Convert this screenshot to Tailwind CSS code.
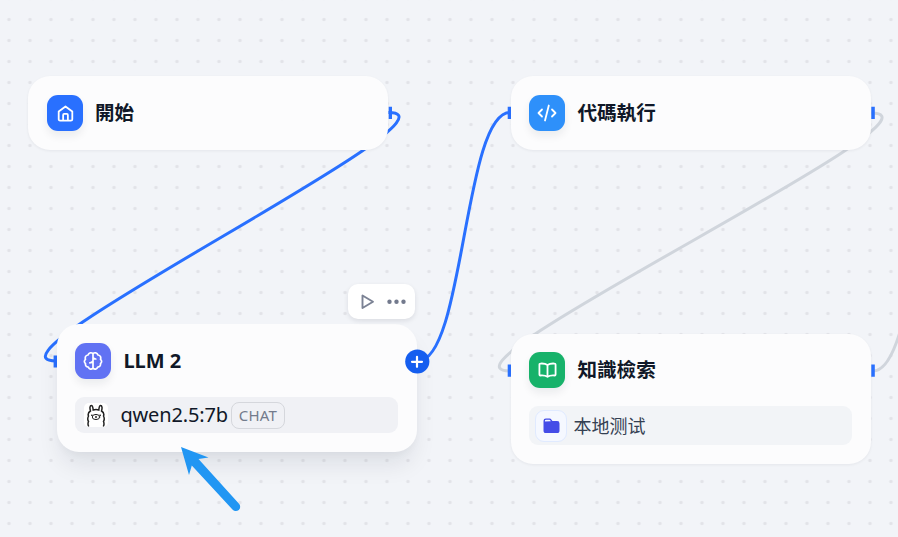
<!DOCTYPE html>
<html lang="zh-Hant">
<head>
<meta charset="utf-8">
<title>Workflow</title>
<script src="https://cdn.jsdelivr.net/npm/@tailwindcss/browser@4"></script>
</head>
<body class="font-['Noto_Sans','Noto_Sans_CJK_TC',sans-serif]">
<main class="relative w-[898px] h-[537px] overflow-hidden bg-[#f2f4f8] text-[#101828]">
  <!-- grid and edges -->
  <svg class="absolute inset-0" width="898" height="537" fill="none">
    <defs><pattern id="dots" x="-1.5" y="9" width="21" height="21" patternUnits="userSpaceOnUse"><circle cx="10.5" cy="10.5" r="1.7" fill="#e2e3e8"/></pattern></defs>
    <rect width="898" height="537" fill="url(#dots)"/>
    <g stroke="#d0d5dc" stroke-width="3">
      <path d="M871.500 113C964 113 417 371 510 371"/>
      <path d="M873 371C919 371 919 113 965 113"/>
    </g>
    <g stroke="#2970ff" stroke-width="3">
      <path d="M388.500 112.500C478 112.500 -34 361 56 361"/>
      <path d="M418 361C464 361 464 112.500 510 112.500"/>
    </g>
    <g fill="#2970ff">
      <path d="M388.700 106.800h3.300v12.200h-3.300zM507.700 106.800h3.300v12.200h-3.300zM871.300 106.800h3.500v12.200h-3.500zM53.600 355.500h3.400v12h-3.400zM507.700 364.500h3.300v12.200h-3.300zM871.300 364.500h3.500v12.200h-3.500z"/>
    </g>
  </svg>

  <section class="absolute left-[28px] top-[76px] w-[360px] h-[74px] rounded-[22px] bg-[#fcfcfd] shadow-[0_1px_3px_rgba(16,24,40,0.06)] flex items-center gap-3 px-[19px]">
    <span class="size-9 rounded-[11px] bg-[#2970ff] shadow-[0_5px_8px_rgba(16,24,40,0.07)] flex items-center justify-center">
      <svg width="17" height="17" viewBox="0 0 18 18" fill="none" stroke="#fff" stroke-width="1.9" stroke-linejoin="round" stroke-linecap="round"><path d="M1.800 6.800L9 1.500l7.200 5.300v8.200q0 1.500-1.500 1.500H3.300q-1.500 0-1.500-1.500zM6.500 16.200v-5.700q0-1 1-1h3q1 0 1 1v5.700"/></svg>
    </span>
    <h2 class="text-[19.5px] leading-7 font-bold">開始</h2>
  </section>

  <section class="absolute left-[510.500px] top-[76px] w-[360px] h-[74px] rounded-[22px] bg-[#fcfcfd] shadow-[0_1px_3px_rgba(16,24,40,0.06)] flex items-center gap-3 px-[18.900px]">
    <span class="size-9 rounded-[11px] bg-[#2e90fa] shadow-[0_5px_8px_rgba(16,24,40,0.07)] flex items-center justify-center">
      <svg width="20" height="18" viewBox="0 0 20 18" fill="none" stroke="#fff" stroke-width="1.800" stroke-linejoin="round" stroke-linecap="round"><path d="M5 5.500L1.500 9 5 12.500M15 5.500L18.500 9 15 12.500M11.800 1.500L8 16.500"/></svg>
    </span>
    <h2 class="text-[19.6px] leading-7 font-bold">代碼執行</h2>
  </section>

  <section class="absolute left-[510.500px] top-[334px] w-[360px] h-[130px] rounded-[22px] bg-[#fcfcfd] shadow-[0_1px_3px_rgba(16,24,40,0.06)] flex flex-col pt-[18.400px] px-[18.900px]">
    <div class="flex items-center gap-3">
      <span class="size-9 rounded-[11px] bg-[#17b26a] shadow-[0_5px_8px_rgba(16,24,40,0.07)] flex items-center justify-center">
        <svg width="19" height="18" viewBox="0 0 20 18" fill="none" stroke="#fff" stroke-width="1.900" stroke-linejoin="round" stroke-linecap="round"><path d="M10 3.700C8 2.300 5 2 2.500 2.200q-1 0-1 1v10.600q0 1 1 1c2.500-.2 5.500 0 7.500 1.400 2-1.400 5-1.600 7.500-1.400q1 0 1-1V3.200q0-1-1-1C15 2 12 2.300 10 3.700zV16"/></svg>
      </span>
      <h2 class="text-[19.6px] leading-7 font-bold">知識檢索</h2>
    </div>
    <div class="mt-[18px] h-[39px] rounded-[9px] bg-[#f2f4f7] flex items-center gap-1.5 pl-1.5">
      <span class="size-[32px] rounded-[9px] border border-[#e0eaff] bg-[#f5f8ff] flex items-center justify-center">
        <svg width="17" height="16" viewBox="0 0 18 17" fill="#444ce7"><path fill-rule="evenodd" d="M.500 3q0-2.500 2.500-2.500h4q1.200 0 1.800 1L10 3.200h5q2.500 0 2.500 2.600v7.400q0 2.800-2.500 2.800H3Q.500 16 .500 13.200zM2 3.700l6.300-.3-.8-1.200q-.3-.4-.8-.4H3.200Q2 1.800 2 3z"/></svg>
      </span>
      <span class="text-[18px] leading-6 text-[#354052] font-['Noto_Sans','Noto_Sans_CJK_SC',sans-serif]" lang="zh-Hans">本地测试</span>
    </div>
  </section>

  <section class="absolute left-[56.500px] top-[324.400px] w-[360px] h-[128px] rounded-[22px] bg-[#fcfcfd] shadow-[0_16px_24px_-4px_rgba(16,24,40,0.09),0_4px_8px_-2px_rgba(16,24,40,0.04)] flex flex-col pt-[18.900px] px-[18.900px]">
    <div class="flex items-center gap-3">
      <span class="size-9 rounded-[11px] bg-[#6172f3] shadow-[0_5px_8px_rgba(16,24,40,0.07)] flex items-center justify-center">
        <svg width="20" height="20" viewBox="0 0 20 20" fill="none" stroke="#fff" stroke-width="1.700" stroke-linejoin="round" stroke-linecap="round"><path d="M10 2.800C8.500 1 5.800 1.600 5 4 2.500 4.300 1.700 6.500 2.500 8.300 1 9.500 1 11.500 2.500 12.500c-.4 2 .8 3.600 2.800 3.600C6 18.500 8.500 18.800 10 17.200c1.500 1.600 4 1.300 4.700-1.100 2 0 3.200-1.600 2.800-3.600 1.500-1 1.500-3 0-4.200.800-1.800 0-4-2.500-4.300C14.200 1.600 11.500 1 10 2.800zV17.200M6.800 11.800q2.200 0 3.200-1.800M10 6.500q.8 1.500 2.800 1.500"/></svg>
      </span>
      <h2 class="text-[20px] leading-7 font-bold">LLM 2</h2>
    </div>
    <div class="mt-[18px] h-9 rounded-[9px] bg-[#f0f1f5] flex items-center pl-[9px]">
      <svg class="rounded-[5px] bg-white" width="24" height="24" viewBox="0 0 24 24" fill="none" stroke="#222" stroke-width="1.500" stroke-linecap="round"><path d="M4.500 23q-1-2 0-4.500-1.500-2.500 0-5.500-1.200-3 2-5C5.500 5 6 2.500 7.300 2.500S9 4.500 9.200 7q2.800-1 5.600 0C15 4.500 15.400 2.500 16.700 2.500S18.500 5 17.500 8q3.200 2 2 5 1.500 3 0 5.500 1 2.500 0 4.500"/><ellipse cx="12" cy="14" rx="3.700" ry="2.600" stroke-width="1"/><path d="M7.700 12.200h.3M16 12.200h.3M12 13.500v1"/></svg>
      <span class="ml-3 text-[20px] leading-7 tracking-[-0.15px]">qwen2.5:7b</span>
      <span class="ml-[3px] h-[27px] w-[54px] rounded-[8px] border border-[#d5d7dc] text-[#737b8c] text-[15px] flex items-center justify-center tracking-[0.2px]">CHAT</span>
    </div>
  </section>

  <div class="absolute left-[348px] top-[284px] w-[67px] h-[35px] rounded-[10px] bg-white shadow-[0_2px_5px_rgba(16,24,40,0.10)] flex items-center gap-[11px] pl-3">
    <svg width="16" height="16" viewBox="0 0 16 16" fill="none" stroke="#7b8294" stroke-width="1.900" stroke-linejoin="round"><path d="M2.500 1.500v12.500L13 7.800z"/></svg>
    <svg width="20" height="6" viewBox="0 0 20 6" fill="#737a8d"><circle cx="2.500" cy="2.700" r="2.200"/><circle cx="9.500" cy="2.700" r="2.200"/><circle cx="16.500" cy="2.700" r="2.200"/></svg>
  </div>

  <svg class="absolute left-[405px] top-[349px]" width="25" height="25" viewBox="0 0 25 25"><circle cx="12.300" cy="12.500" r="12.100" fill="#155eef"/><path d="M12 7.800v10M7 12.800h10" stroke="#fff" stroke-width="2.200" stroke-linecap="round"/></svg>

  <svg class="absolute left-[180px] top-[446px]" width="62" height="68" viewBox="0 0 62 68" fill="#2196f3"><path d="M1 1l27.500 10.500-10 1.500L59 57.800a4.200 4.200 0 0 1-6.300 5.900L11.800 19.500 9 29z"/></svg>
</main>
</body>
</html>
